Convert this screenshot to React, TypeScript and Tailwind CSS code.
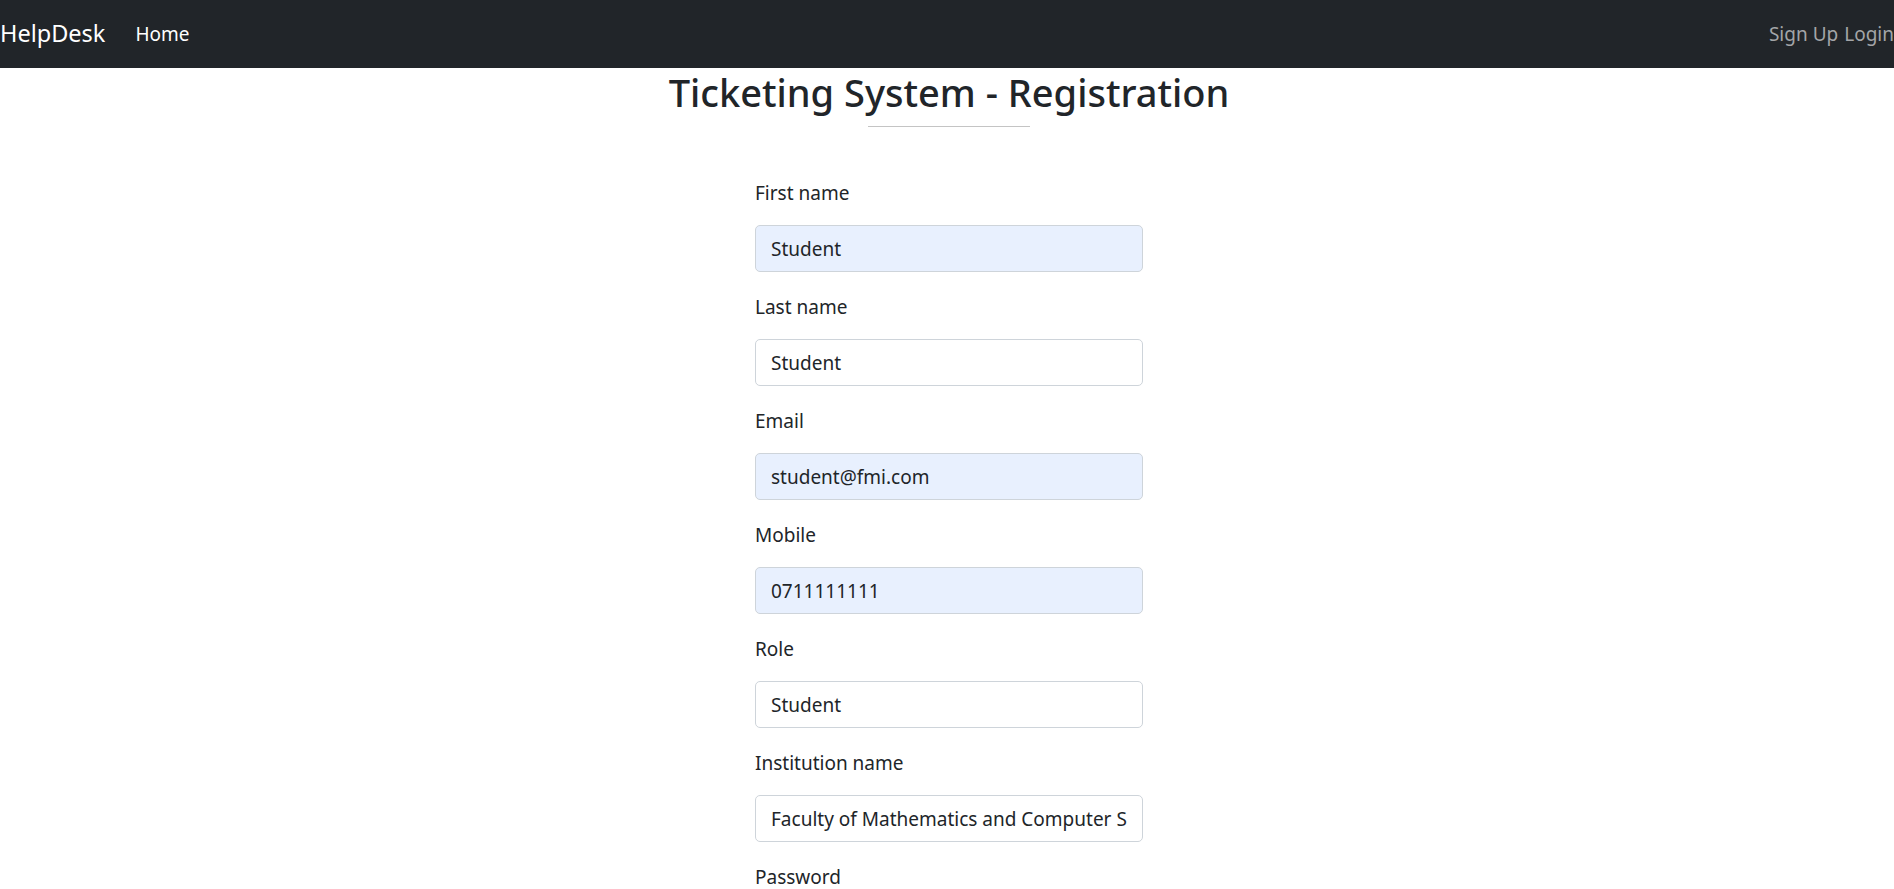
import React from "react";

const fields: { label: string; value: string; autofill: boolean; type?: string }[] = [
  { label: "First name", value: "Student", autofill: true },
  { label: "Last name", value: "Student", autofill: false },
  { label: "Email", value: "student@fmi.com", autofill: true },
  { label: "Mobile", value: "0711111111", autofill: true },
  { label: "Role", value: "Student", autofill: false },
  { label: "Institution name", value: "Faculty of Mathematics and Computer Science", autofill: false },
  { label: "Password", value: "", autofill: false, type: "password" },
];

export default function App() {
  return (
    <div className="min-h-screen bg-white text-[#212529]" style={{ fontFamily: "'Noto Sans', 'Open Sans', sans-serif" }}>
      <nav className="h-[68px] bg-[#212529] flex items-center justify-between">
        <div className="flex items-center">
          <span className="text-[23.5px] text-white leading-none">HelpDesk</span>
          <span className="ml-[30px] text-[19px] text-white leading-none">Home</span>
        </div>
        <div className="flex items-center gap-[6px] text-[19px] text-[#a3a5a8] leading-none">
          <span>Sign Up</span>
          <span>Login</span>
        </div>
      </nav>
      <div className="flex flex-col items-center pl-[4px]">
        <h2 className="text-[38px] leading-[48px] font-medium">Ticketing System - Registration</h2>
        <div className="mt-[10px] w-[162px] h-px bg-[#c4c4c4]" />
        <form className="mt-[51px] w-[388px] flex flex-col">
          {fields.map((f) => (
            <div key={f.label} className="flex flex-col mb-[20px]">
              <label className="text-[19px] leading-[30px] mb-[17px] text-[#212529]">{f.label}</label>
              <input
                readOnly
                type={f.type ?? "text"}
                value={f.value}
                className={`h-[47px] w-full rounded-[5px] border border-[#ced4da] px-[15px] text-[19px] text-[#212529] outline-none ${
                  f.autofill ? "bg-[#e8f0fe]" : "bg-white"
                }`}
                style={{ fontFamily: "'Noto Sans', 'Open Sans', sans-serif" }}
              />
            </div>
          ))}
        </form>
      </div>
    </div>
  );
}
